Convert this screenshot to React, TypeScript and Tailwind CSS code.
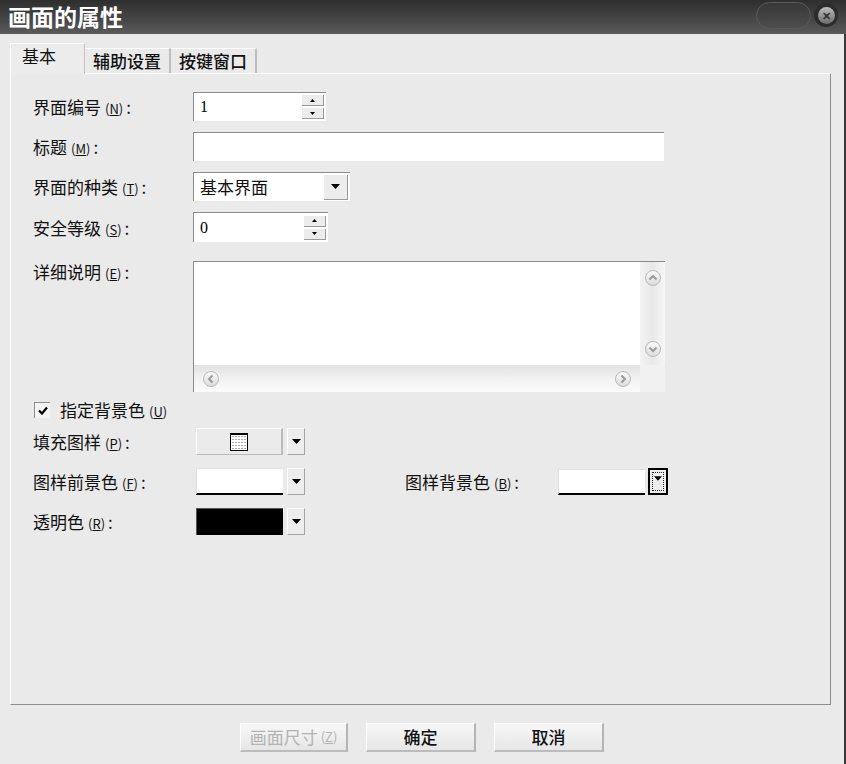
import React from "react";

const cjk = "font-['Noto_Sans_CJK_SC','Noto_Sans',sans-serif]";

function Key({ k }: { k: string }) {
	return (
		<span className="text-[13px] ml-[4px]">
			(<span className="underline">{k}</span>)
		</span>
	);
}

function Label({ text, k, className = "" }: { text: string; k: string; className?: string }) {
	return (
		<div className={`text-[17px] text-[#111] whitespace-nowrap leading-none ${className}`}>
			{text}
			<Key k={k} />
			<span className="ml-[3px]">:</span>
		</div>
	);
}

function DownTri({ w = 9 }: { w?: number }) {
	return (
		<svg width={w} height={5} viewBox="0 0 9 5">
			<path d="M0 0h9L4.5 5z" fill="#000" />
		</svg>
	);
}

function Spinner() {
	return (
		<div className="flex flex-col gap-[2px] pr-[2px]">
			<div className="w-[22px] h-[11px] bg-[#ececec] border-r border-b border-[#9a9a9a] flex items-center justify-center">
				<svg width="5" height="3" viewBox="0 0 5 3">
					<path d="M0 3h5L2.5 0z" fill="#000" />
				</svg>
			</div>
			<div className="w-[22px] h-[11px] bg-[#ececec] border-r border-b border-[#9a9a9a] flex items-center justify-center">
				<svg width="5" height="3" viewBox="0 0 5 3">
					<path d="M0 0h5L2.5 3z" fill="#000" />
				</svg>
			</div>
		</div>
	);
}

const sunken = "bg-white border-t border-l border-[#8c8c8c] border-b-[#e4e4e4] border-r-[#e4e4e4]";

function RoundBtn({ dir }: { dir: "up" | "down" | "left" | "right" }) {
	const d = {
		up: "M3.5 8.5L7 5l3.5 3.5",
		down: "M3.5 5.5L7 9l3.5-3.5",
		left: "M8.5 3.5L5 7l3.5 3.5",
		right: "M5.5 3.5L9 7l-3.5 3.5",
	}[dir];
	return (
		<div className="w-[16px] h-[16px] rounded-full border border-[#b9b9b9] bg-gradient-to-b from-[#fafafa] to-[#dcdcdc] flex items-center justify-center">
			<svg width="14" height="14" viewBox="0 0 14 14">
				<path d={d} fill="none" stroke="#9a9a9a" strokeWidth="2" />
			</svg>
		</div>
	);
}

function ArrowBtn() {
	return (
		<div className="w-[18px] h-[27px] ml-[4px] bg-[#ededed] border-t border-l border-white border-r border-b border-r-[#a5a5a5] border-b-[#a5a5a5] flex items-center justify-center">
			<DownTri />
		</div>
	);
}

function Tab({ label, active }: { label: string; active?: boolean }) {
	return active ? (
		<div className="w-[75px] h-[31px] -mb-px bg-[#ececec] border-t border-l border-white border-r border-r-[#c4c4c4] pl-[11px] pt-[2px] text-[17px] leading-[20px] text-[#111] z-10">
			{label}
		</div>
	) : (
		<div className="h-[25px] px-[8px] border-t border-white border-r-2 border-r-[#bdbdbd] text-[17px] text-[#111] leading-[24px] font-medium">
			{label}
		</div>
	);
}

function Button({ label, disabled, className = "" }: { label: React.ReactNode; disabled?: boolean; className?: string }) {
	return (
		<div
			className={`h-[29px] flex items-center justify-center bg-gradient-to-b from-[#f7f7f7] to-[#e6e6e6] border-t border-l border-white border-r-2 border-b-2 border-r-[#b4b4b4] border-b-[#bcbcbc] text-[17px] ${
				disabled ? "text-[#b3b3b3]" : "text-[#111] font-medium"
			} ${className}`}
		>
			{label}
		</div>
	);
}

export default function App() {
	return (
		<div className={`w-[846px] h-[764px] bg-[#eaeaea] flex flex-col overflow-hidden ${cjk}`}>
			{/* title bar */}
			<div className="h-[34px] shrink-0 bg-gradient-to-b from-[#2e2e2e] to-[#5a5a5a] flex items-center justify-between">
				<div className="pl-[8px] pb-[3px] text-[23px] leading-[28px] font-bold text-white whitespace-nowrap">画面的属性</div>
				<div className="flex items-center gap-[3px] pb-[4px] pr-[8px]">
					<div className="w-[55px] h-[27px] rounded-full bg-gradient-to-b from-[#383838] to-[#4e4e4e] border border-[#5a5a5a]" />
					<div className="w-[24px] h-[24px] rounded-full bg-[#2c2c2c] flex items-center justify-center">
						<div className="w-[17px] h-[17px] rounded-full bg-gradient-to-b from-[#bdbdbd] to-[#6e6e6e] flex items-center justify-center text-[11px] font-bold text-[#333] leading-none">
							✕
						</div>
					</div>
				</div>
			</div>

			<div className="flex-1 flex flex-col pl-[10px] pr-[13px] pt-[9px] border-r-2 border-r-[#3a3a3a]">
				{/* tabs */}
				<div className="flex items-end h-[30px]">
					<Tab label="基本" active />
					<Tab label="辅助设置" />
					<Tab label="按键窗口" />
				</div>

				{/* panel */}
				<div className="h-[632px] border-t border-l border-white border-r border-b border-r-[#8e8e8e] border-b-[#8e8e8e] pt-[18px] pl-[22px] flex flex-col">
					<div className="flex items-center h-[29px]">
						<Label text="界面编号" k="N" className="w-[160px]" />
						<div className={`w-[133px] h-[29px] ${sunken} flex items-center justify-between`}>
							<span className="pl-[6px] text-[16px] font-['Liberation_Serif',serif]">1</span>
							<Spinner />
						</div>
					</div>

					<div className="flex items-center h-[29px] mt-[11px]">
						<Label text="标题" k="M" className="w-[160px]" />
						<div className={`w-[471px] h-[29px] ${sunken}`} />
					</div>

					<div className="flex items-center h-[29px] mt-[11px]">
						<Label text="界面的种类" k="T" className="w-[160px]" />
						<div className={`w-[157px] h-[29px] ${sunken} flex items-center justify-between`}>
							<span className="pl-[6px] text-[17px] text-[#111]">基本界面</span>
							<div className="w-[24px] h-[25px] mr-[2px] bg-[#ececec] border-r border-b border-[#9a9a9a] flex items-center justify-center">
								<DownTri />
							</div>
						</div>
					</div>

					<div className="flex items-center h-[30px] mt-[11px]">
						<Label text="安全等级" k="S" className="w-[160px]" />
						<div className={`w-[135px] h-[30px] ${sunken} flex items-center justify-between`}>
							<span className="pl-[6px] text-[16px] font-['Liberation_Serif',serif]">0</span>
							<Spinner />
						</div>
					</div>

					<div className="flex items-start mt-[19px]">
						<Label text="详细说明" k="E" className="w-[160px] pt-[2px]" />
						<div className={`w-[472px] h-[131px] ${sunken} flex flex-col`}>
							<div className="flex flex-1">
								<div className="flex-1" />
								<div className="w-[25px] bg-gradient-to-r from-[#f3f3f3] via-[#e8e8e8] to-[#f6f6f6] flex flex-col items-center justify-between py-[8px]">
									<RoundBtn dir="up" />
									<RoundBtn dir="down" />
								</div>
							</div>
							<div className="flex h-[27px]">
								<div className="flex-1 bg-gradient-to-b from-[#e2e2e2] via-[#f2f2f2] to-[#fbfbfb] flex items-center justify-between px-[9px]">
									<RoundBtn dir="left" />
									<RoundBtn dir="right" />
								</div>
								<div className="w-[25px] bg-[#f1f1f1]" />
							</div>
						</div>
					</div>

					<div className="flex items-center h-[17px] mt-[9px] pl-[1px]">
						<div className="w-[16px] h-[16px] bg-[#f4f4f4] border-t border-l border-[#8c8c8c] border-b-[#dcdcdc] border-r-[#dcdcdc] flex items-center justify-center">
							<svg width="10" height="9" viewBox="0 0 10 9">
								<path d="M1 4.5l3 3L9 1.5" fill="none" stroke="#000" strokeWidth="2.2" />
							</svg>
						</div>
						<div className="ml-[10px] text-[17px] text-[#111] leading-none">
							指定背景色
							<Key k="U" />
						</div>
					</div>

					<div className="flex items-center h-[27px] mt-[10px]">
						<Label text="填充图样" k="P" className="w-[163px]" />
						<div className="w-[87px] h-[27px] bg-[#ebebeb] border-t border-l border-white border-r-2 border-b border-r-[#bbbbbb] border-b-[#bbbbbb] flex items-center justify-center">
							<svg width="18" height="18" viewBox="0 0 18 18">
								<rect x="0.5" y="0.5" width="17" height="17" fill="#fff" stroke="#000" />
								<rect x="0" y="0" width="18" height="2" fill="#000" />
								<g fill="#555">
									{[3, 6, 9, 12, 15].map((y) =>
										[3, 6, 9, 12, 15].map((x) => <rect key={`${x}-${y}`} x={x - 0.5} y={y} width="1" height="1" />)
									)}
								</g>
							</svg>
						</div>
						<ArrowBtn />
					</div>

					<div className="flex items-center h-[27px] mt-[13px]">
						<Label text="图样前景色" k="F" className="w-[163px]" />
						<div className="w-[87px] h-[27px] bg-white border-t border-l border-[#e0e0e0] border-b-2 border-b-black" />
						<ArrowBtn />
						<Label text="图样背景色" k="B" className="ml-[100px] w-[153px]" />
						<div className="w-[87px] h-[26px] bg-white border-t border-l border-[#e0e0e0] border-b-2 border-b-black" />
						<div className="w-[20px] h-[27px] ml-[3px] bg-[#ededed] border-2 border-black flex items-center justify-center">
							<div className="w-[12px] h-[19px] border border-dotted border-[#222] flex items-start justify-center pt-[3px]">
								<DownTri w={8} />
							</div>
						</div>
					</div>

					<div className="flex items-center h-[27px] mt-[13px]">
						<Label text="透明色" k="R" className="w-[163px]" />
						<div className="w-[87px] h-[27px] bg-black border-t border-l border-[#555]" />
						<ArrowBtn />
					</div>
				</div>

				{/* bottom buttons */}
				<div className="flex pl-[230px] gap-[18px] pt-[18px]">
					<Button label={<>画面尺寸<span className="text-[13px] ml-[3px]">(<span className="underline">Z</span>)</span></>} disabled className="w-[108px]" />
					<Button label="确定" className="w-[110px]" />
					<Button label="取消" className="w-[110px]" />
				</div>
			</div>
		</div>
	);
}
